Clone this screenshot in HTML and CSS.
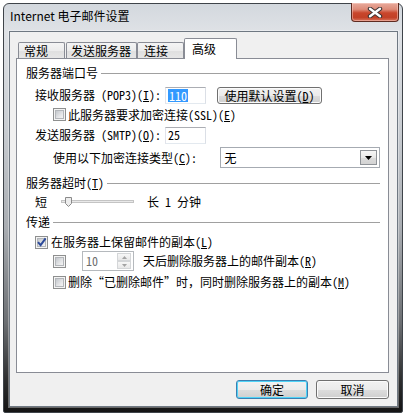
FILE: index.html
```html
<!DOCTYPE html>
<html lang="zh-CN">
<head>
<meta charset="utf-8">
<title>Internet 电子邮件设置</title>
<link rel="stylesheet" href="styles.css">
</head>
<body>
<div class="window">
  <div class="titlebar">
    <span class="title">Internet 电子邮件设置</span>
    <div class="close">
      <svg width="16" height="11" viewBox="0 0 16 11"><path d="M3 1.8 L13 9.2 M13 1.8 L3 9.2" stroke="#3a3232" stroke-width="4.4" stroke-linecap="round" fill="none"/><path d="M3 1.8 L13 9.2 M13 1.8 L3 9.2" stroke="#ffffff" stroke-width="2.4" stroke-linecap="round" fill="none"/></svg>
    </div>
  </div>
  <div class="client">
    <div class="tabs">
      <div class="tab t1">常规</div>
      <div class="tab t2">发送服务器</div>
      <div class="tab t3">连接</div>
      <div class="tab active">高级</div>
    </div>
    <div class="panel">
      <div class="sect">服务器端口号</div>
      <div class="row r-pop i1">
        <span class="lbl">接收服务器 (POP3)(<u>I</u>):</span>
        <span class="tb"><span class="sel">110</span></span>
        <span class="pbtn">使用默认设置(<u>D</u>)</span>
      </div>
      <div class="row r-ssl i2">
        <span class="cb"><span class="cb-in"></span></span>
        <span class="cbl">此服务器要求加密连接(SSL)(<u>E</u>)</span>
      </div>
      <div class="row r-smtp i1">
        <span class="lbl">发送服务器 (SMTP)(<u>O</u>):</span>
        <span class="tb">25</span>
      </div>
      <div class="row r-enc i2">
        <span class="lbl2">使用以下加密连接类型(<u>C</u>):</span>
        <span class="combo"><span>无</span><span class="drop"><svg width="7" height="4" viewBox="0 0 7 4"><path d="M0 0 H7 L3.5 4 Z" fill="#000"/></svg></span></span>
      </div>
      <div class="sect s2">服务器超时(<u>T</u>)</div>
      <div class="row r-slide i1">
        <span>短</span>
        <svg class="slider" width="73" height="14" viewBox="0 0 73 14">
          <rect x="0.5" y="5.5" width="72" height="2" fill="#e9e9e9" stroke="#c4c4c4"/>
          <path d="M4.5 2.5 H10.5 V8.5 L7.5 11.5 L4.5 8.5 Z" fill="#ededed" stroke="#8a8a8a"/>
        </svg>
        <span class="long">长 1 分钟</span>
      </div>
      <div class="sect s3">传递</div>
      <div class="row r-keep i1">
        <span class="cb"><span class="cb-in"><svg width="9" height="9" viewBox="0 0 9 9"><path d="M1 4.2 L3.6 7.2 L8.6 0.4" stroke="#2c4a9a" stroke-width="2" fill="none"/></svg></span></span>
        <span class="cbl l3">在服务器上保留邮件的副本(<u>L</u>)</span>
      </div>
      <div class="row r-spin i2">
        <span class="cb dis"><span class="cb-in"></span></span>
        <span class="spin"><span class="val">10</span><span class="arrows"><span class="ar"><svg width="5" height="3" viewBox="0 0 5 3"><path d="M0 3 H5 L2.5 0 Z" fill="#a3a3a3"/></svg></span><span class="ar"><svg width="5" height="3" viewBox="0 0 5 3"><path d="M0 0 H5 L2.5 3 Z" fill="#a3a3a3"/></svg></span></span></span>
        <span class="days">天后删除服务器上的邮件副本(<u>R</u>)</span>
      </div>
      <div class="row r-del i2">
        <span class="cb"><span class="cb-in"></span></span>
        <span class="cbl">删除“已删除邮件”时，同时删除服务器上的副本(<u>M</u>)</span>
      </div>
    </div>
    <div class="actions">
      <button class="btn ok">确定</button>
      <button class="btn cancel">取消</button>
    </div>
  </div>
</div>
</body>
</html>
```
FILE: styles.css
```css
html, body {
  margin: 0;
  padding: 0;
  background: #ffffff;
}
body {
  width: 406px;
  height: 416px;
  overflow: hidden;
}
.window {
  box-sizing: border-box;
  width: 400px;
  height: 410px;
  margin: 3px 0 0 3px;
  border: 1px solid #3f444a;
  border-radius: 6px 6px 2px 2px;
  padding-bottom: 5px;
  display: flex;
  flex-direction: column;
  background: linear-gradient(to bottom, #d3d8de 0%, #dfe2e6 7%, #c9cdd2 30%, #a9adb2 55%, #6c6f73 78%, #2e2f30 92%, #141414 100%);
}
.titlebar {
  height: 27px;
  flex: none;
  display: flex;
  justify-content: space-between;
  align-items: flex-start;
}
.title {
  margin: 4px 0 0 6px;
  font: 12px/16px "Noto Sans CJK SC", "Noto Sans", sans-serif;
  color: #000;
}
.close {
  box-sizing: border-box;
  width: 48px;
  height: 19px;
  margin: -1px 3px 0 0;
  border: 1px solid #5e2a20;
  border-top: none;
  border-radius: 0 0 4px 4px;
  background: linear-gradient(to bottom, #e8aa9c 0%, #de8c79 35%, #c9462c 55%, #c24026 80%, #d9735c 100%);
  box-shadow: inset 0 0 0 1px rgba(255, 220, 210, 0.45);
  display: flex;
  align-items: center;
  justify-content: center;
}
.client {
  flex: 1;
  box-sizing: border-box;
  margin: 0 4px 0 5px;
  border: 1px solid #6f7882;
  background: #f0f0f0;
  padding: 6px 8px 7px 6px;
  display: flex;
  flex-direction: column;
  box-shadow: 0 0 0 1px rgba(255, 255, 255, 0.35);
}
.tabs {
  display: flex;
  align-items: flex-end;
  height: 20px;
  margin-left: 2px;
  flex: none;
}
.tab {
  box-sizing: border-box;
  height: 16px;
  border: 1px solid #898c95;
  border-bottom: none;
  border-radius: 2px 2px 0 0;
  background: linear-gradient(to bottom, #f4f4f4 0%, #ececec 50%, #dfdfdf 51%, #e6e6e6 100%);
  font: 12px/15px "Noto Sans CJK SC", "Noto Sans", sans-serif;
  color: #000;
  white-space: nowrap;
}
.t1 { width: 47px; padding-left: 5px; margin-right: 1px; }
.t2 { width: 71px; padding-left: 4px; }
.t3 { width: 47px; padding-left: 6px; }
.tab.active {
  width: 53px;
  height: 21px;
  margin-bottom: -1px;
  padding: 2px 0 0 7px;
  line-height: 16px;
  background: #ffffff;
  position: relative;
  z-index: 1;
}
.panel {
  flex: none;
  box-sizing: border-box;
  height: 315px;
  border: 1px solid #898c95;
  background: #ffffff;
  padding: 6px 8px 0 9px;
  font: 12px/16px "Noto Sans Mono CJK SC", "Noto Sans CJK SC", monospace;
  color: #000;
}
u { text-decoration: underline; text-underline-offset: 1px; }
.sect {
  display: flex;
  align-items: center;
  height: 16px;
  white-space: nowrap;
}
.sect::after {
  content: "";
  flex: 1;
  height: 1px;
  margin-left: 3px;
  background: #a0a0a0;
}
.s2 { margin-top: 7px; }
.s3 { margin-top: 4px; }
.row {
  display: flex;
  align-items: center;
  white-space: nowrap;
}
.i1 { margin-left: 9px; }
.i2 { margin-left: 27px; }
.r-pop { height: 18px; margin-top: 5px; }
.r-ssl { height: 15px; margin-top: 3px; }
.r-smtp { height: 18px; margin-top: 4px; }
.r-enc { height: 21px; margin-top: 3px; }
.r-slide { height: 16px; margin-top: 3px; }
.r-keep { height: 16px; margin-top: 4px; }
.r-spin { height: 20px; margin-top: 1px; }
.r-del { height: 16px; margin-top: 3px; }
.lbl { width: 130px; }
.lbl2 { width: 168px; }
.tb {
  box-sizing: border-box;
  width: 41px;
  height: 17px;
  border: 1px solid;
  border-color: #abadb3 #dbdfe6 #e3e9ef #e2e3ea;
  background: #fff;
  padding-left: 2px;
  display: flex;
  align-items: center;
}
.sel {
  background: #3399ff;
  color: #fff;
  line-height: 13px;
  padding: 0 1px;
}
.pbtn {
  box-sizing: border-box;
  width: 105px;
  height: 17px;
  margin-left: 11px;
  border: 1px solid #707070;
  border-radius: 3px;
  background: linear-gradient(to bottom, #f2f2f2 0%, #ebebeb 50%, #dddddd 51%, #cfcfcf 100%);
  box-shadow: inset 0 0 0 1px #fbfbfb;
  display: flex;
  align-items: center;
  justify-content: center;
  line-height: 15px;
}
.cb {
  box-sizing: border-box;
  flex: none;
  width: 13px;
  height: 13px;
  border: 1px solid #8e8f8f;
  background: #f4f4f4;
  padding: 1px;
}
.cb-in {
  display: block;
  box-sizing: border-box;
  width: 9px;
  height: 9px;
  border: 1px solid #b3b6ba;
  background: linear-gradient(135deg, #c3c7cc 0%, #e4e5e7 60%, #f4f4f4 100%);
  overflow: visible;
}
.cb-in svg { display: block; margin: -1px 0 0 -1px; overflow: visible; }
.cbl { margin-left: 2px; }
.l3 { margin-left: 3px; }
.combo {
  box-sizing: border-box;
  width: 160px;
  height: 21px;
  border: 1px solid #a6abb2;
  background: #fff;
  display: flex;
  align-items: center;
  justify-content: space-between;
  padding-left: 3px;
}
.drop {
  box-sizing: border-box;
  width: 17px;
  height: 15px;
  margin-right: 2px;
  border: 1px solid #8f9398;
  background: linear-gradient(to bottom, #f6f6f6 0%, #e9e9e9 50%, #dcdcdc 51%, #d3d3d3 100%);
  display: flex;
  align-items: center;
  justify-content: center;
}
.slider { margin-left: 14px; flex: none; }
.long { margin-left: 13px; white-space: pre; }
.spin {
  box-sizing: border-box;
  width: 52px;
  height: 20px;
  margin-left: 16px;
  border: 1px solid #b5b9bd;
  background: #fff;
  display: flex;
  align-items: center;
  justify-content: space-between;
  padding: 0 2px 0 3px;
}
.val { color: #6d6d6d; }
.arrows {
  display: flex;
  flex-direction: column;
}
.ar {
  box-sizing: border-box;
  width: 14px;
  height: 8px;
  border: 1px solid #d4d6d8;
  background: linear-gradient(to bottom, #f7f7f7, #e8e8e8);
  display: flex;
  align-items: center;
  justify-content: center;
}
.days { margin-left: 9px; }
.actions {
  display: flex;
  justify-content: flex-end;
  gap: 8px;
  margin-top: 7px;
  flex: none;
}
.btn {
  box-sizing: border-box;
  height: 19px;
  margin: 0;
  padding: 0;
  border: 1px solid #707070;
  border-radius: 3px;
  background: linear-gradient(to bottom, #f2f2f2 0%, #ebebeb 50%, #dddddd 51%, #cfcfcf 100%);
  box-shadow: inset 0 0 0 1px #fbfbfb;
  font: 12px/15px "Noto Sans CJK SC", "Noto Sans", sans-serif;
  color: #000;
}
.ok {
  width: 72px;
  border-color: #3c7fb1;
  box-shadow: inset 0 0 0 1px #4fd3f7;
}
.cancel { width: 73px; }
```
